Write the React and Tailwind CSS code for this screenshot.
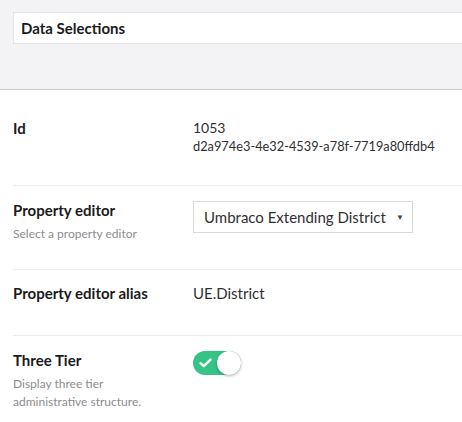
const Check = () => (
  <svg width="13" height="10" viewBox="0 0 13 10" fill="none">
    <path d="M1.5 5.2 L4.8 8.2 L11.5 1.6" stroke="white" strokeWidth="2.4" strokeLinecap="round" strokeLinejoin="round" />
  </svg>
);

const App = () => {
  return (
    <div className="min-h-screen bg-white text-[#1b1b1d]" style={{ fontFamily: 'Lato, "Open Sans", sans-serif' }}>
      <div className="h-[90px] bg-[#f3f3f5] border-b border-[#c8c8cb] pt-[12px] pl-[13px] overflow-hidden">
        <div className="h-[32px] -mr-[6px] bg-white border border-[#e3e3e6] pl-[7px] flex items-center">
          <span className="text-[15px] font-bold leading-[20px]">Data Selections</span>
        </div>
      </div>

      <div className="pl-[13px]">
        <div className="h-[96px] border-b border-[#ececee] pt-[28px] flex">
          <div className="w-[180px] shrink-0 text-[15px] font-bold leading-[20px]">Id</div>
          <div className="text-[#303033]">
            <div className="text-[14px] leading-[20px]">1053</div>
            <div className="text-[12.8px] leading-[16px]">d2a974e3-4e32-4539-a78f-7719a80ffdb4</div>
          </div>
        </div>

        <div className="h-[84px] border-b border-[#ececee] pt-[14px] flex">
          <div className="w-[180px] shrink-0">
            <div className="text-[15px] font-bold leading-[20px]">Property editor</div>
            <div className="mt-[5px] text-[12px] leading-[18px] text-[#8c8c90]">Select a property editor</div>
          </div>
          <div className="mt-[1px] w-[220px] h-[32px] border border-[#d8d8db] bg-white flex items-center justify-between pl-[10px] pr-[8px] text-[#303033]">
            <span className="text-[15px] leading-[20px]">Umbraco Extending District</span>
            <span className="text-[8px] leading-none text-[#444]">▼</span>
          </div>
        </div>

        <div className="h-[66px] border-b border-[#ececee] pt-[13px] flex">
          <div className="w-[180px] shrink-0 text-[15px] font-bold leading-[20px]">Property editor alias</div>
          <div className="text-[15px] leading-[20px] text-[#303033]">UE.District</div>
        </div>

        <div className="pt-[14px] flex">
          <div className="w-[180px] shrink-0">
            <div className="text-[15px] font-bold leading-[20px]">Three Tier</div>
            <div className="mt-[5px] w-[150px] text-[12px] leading-[18px] text-[#8c8c90]">
              Display three tier administrative structure.
            </div>
          </div>
          <div className="mt-[1px] relative w-[48px] h-[24px] rounded-full bg-[#35c486] flex items-center pl-[6px]">
            <Check />
            <div className="absolute right-0 top-0 w-[24px] h-[24px] rounded-full bg-white shadow-[0_1px_3px_rgba(0,0,0,0.3)]" />
          </div>
        </div>
      </div>
    </div>
  );
};

export default App;
